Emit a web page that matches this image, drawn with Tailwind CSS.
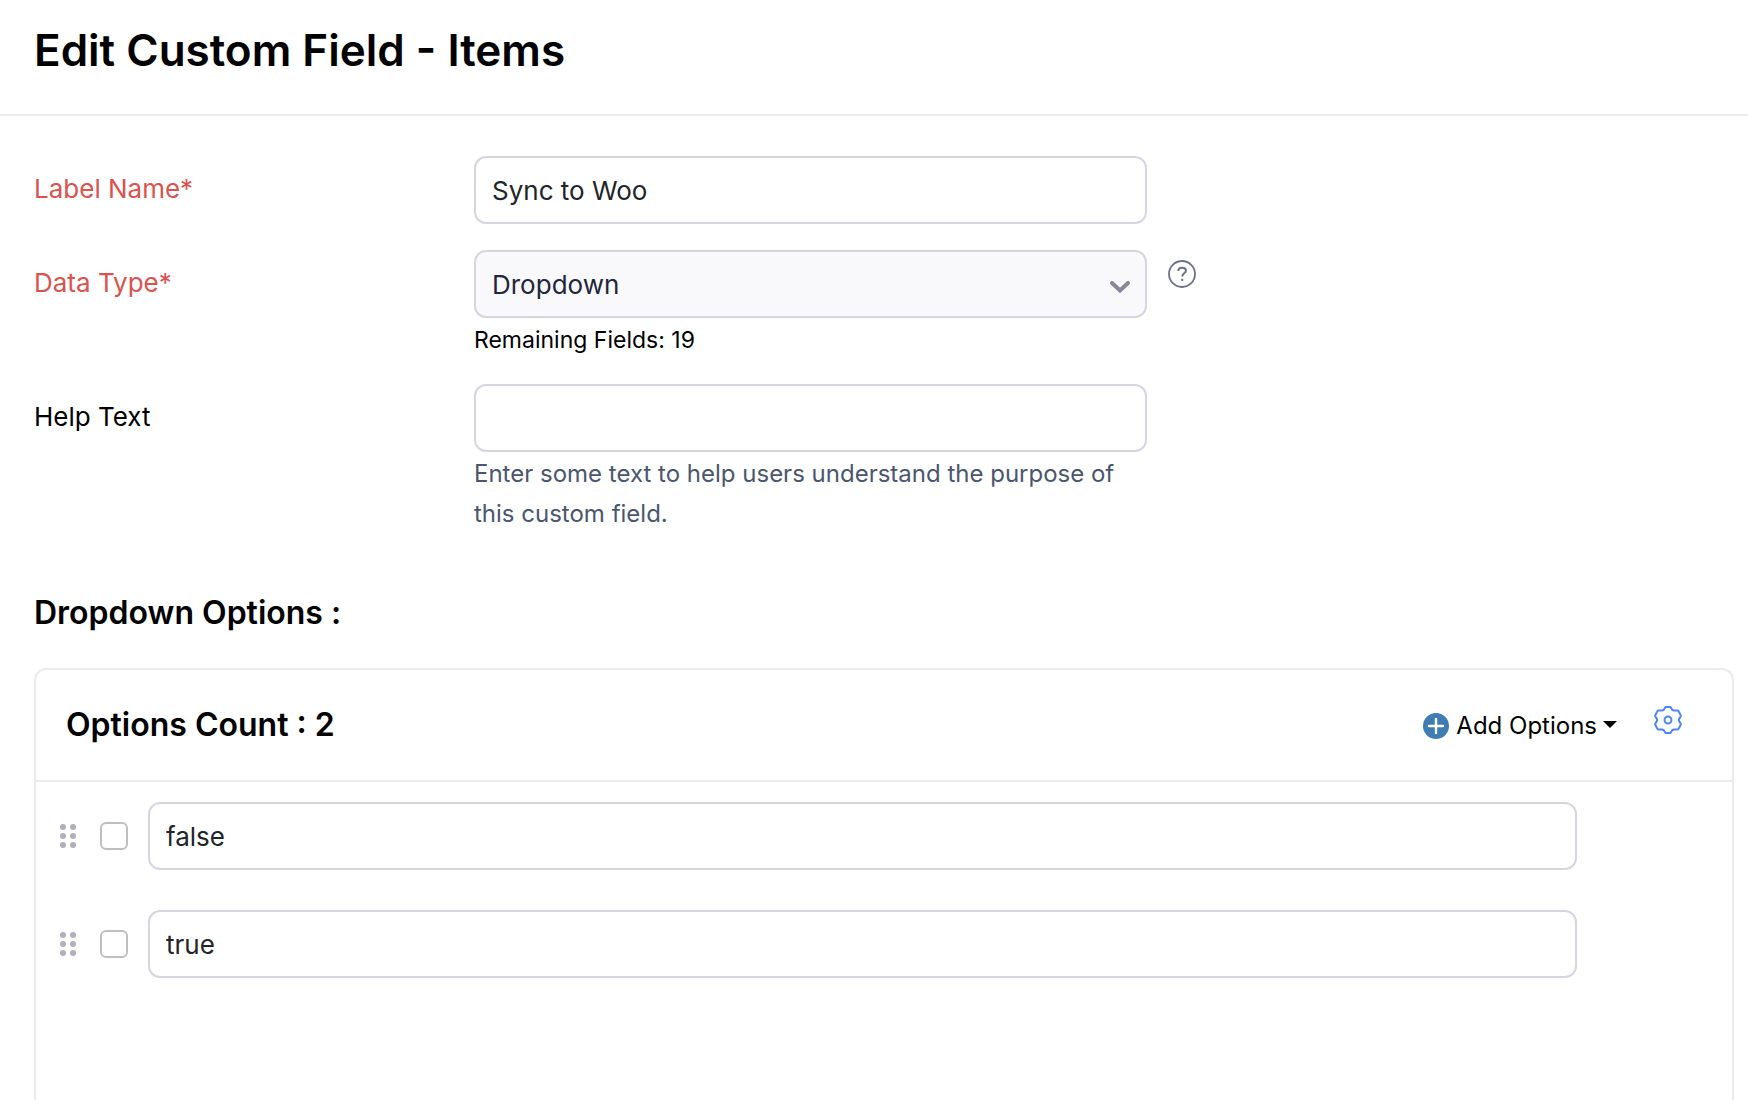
<!DOCTYPE html>
<html lang="en">

<head>
  <meta charset="UTF-8">
  <meta name="viewport" content="width=device-width, initial-scale=1.0">
  <title>Edit Custom Field - Items</title>
  <script src="https://cdn.jsdelivr.net/npm/@tailwindcss/browser@4"></script>
</head>

<body class="bg-white text-black font-['Inter',sans-serif] text-[26px] overflow-hidden">
  <div class="flex flex-col h-screen">
    <!-- Page Header -->
    <header class="px-[34px] pt-5 pb-[34px] border-b-2 border-[#ededed]">
      <h1 class="text-[44px] leading-[60px] font-semibold">Edit Custom Field - Items</h1>
    </header>

    <!-- Form -->
    <form class="flex flex-col flex-1 pl-[34px] pr-[14px] pt-10">
      <div class="flex items-start">
        <label for="label-name" class="w-[440px] pt-4 leading-[34px] text-[#d9534f]">Label Name*</label>
        <input id="label-name" type="text" value="Sync to Woo" class="flex-1 min-w-0 max-w-[673px] h-[68px] px-4 border-2 border-[#d7d5e2] rounded-xl text-[#212529]">
      </div>

      <div class="flex items-start mt-[26px]">
        <label for="data-type" class="w-[440px] pt-4 leading-[34px] text-[#d9534f]">Data Type*</label>
        <div class="flex-1 min-w-0 max-w-[673px]">
          <div class="relative">
            <select id="data-type" class="appearance-none w-full h-[68px] px-4 border-2 border-[#d7d5e2] rounded-xl bg-[#f9f9fb] text-[#21263c]">
              <option>Dropdown</option>
            </select>
            <svg class="absolute right-[17px] top-[31px] w-5 h-3 pointer-events-none" viewBox="0 0 20 12" fill="none" stroke="#8a869a" stroke-width="4" stroke-linecap="round">
              <path d="M2 2l8 7.5L18 2" />
            </svg>
          </div>
          <p class="mt-1 text-[23px] leading-9">Remaining Fields: 19</p>
        </div>
        <button type="button" aria-label="Help" class="ml-[21px] mt-[10px]">
          <svg class="w-7 h-7" viewBox="0 0 28 28" fill="none" stroke="#6c718a">
            <circle cx="14" cy="14" r="13" stroke-width="1.8" />
            <path d="M10.300 11c.1-2.200 1.600-3.300 3.800-3.300 2.300 0 3.800 1.200 3.800 3 0 2.500-3.700 2.700-3.700 5.800M14.200 18.700v2.200" stroke-width="2" />
          </svg>
        </button>
      </div>

      <div class="flex items-start mt-[26px]">
        <label for="help-text" class="w-[440px] pt-4 leading-[34px]">Help Text</label>
        <div class="flex-1 min-w-0 max-w-[673px]">
          <input id="help-text" type="text" class="block w-full h-[68px] px-4 border-2 border-[#d7d5e2] rounded-xl text-[#212529]">
          <p class="mt-[2px] text-2xl leading-10 text-[#4b566e]">Enter some text to help users understand the purpose of this custom field.</p>
        </div>
      </div>

      <h2 class="mt-[58px] text-[32px] leading-[42px] font-semibold">Dropdown Options :</h2>

      <!-- Options Panel -->
      <section class="flex-1 mt-[34px] border-2 border-b-0 border-[#ebeaf0] rounded-t-xl">
        <div class="flex items-center h-28 pl-[30px] pr-[50px] border-b-2 border-[#ebeaf0]">
          <h3 class="text-[32px] leading-10 font-semibold">Options Count : 2</h3>
          <button type="button" class="ml-auto mt-[2px] flex items-center text-2xl">
            <svg class="w-[26px] h-[26px] mr-[7px]" viewBox="0 0 26 26">
              <circle cx="13" cy="13" r="13" fill="#3f7cb2" />
              <path d="M13 6v14M6 13h14" stroke="#fff" stroke-width="2.400" stroke-linecap="round" />
            </svg>
            Add Options
            <svg class="w-[14px] h-[7px] ml-[6px] mb-1" viewBox="0 0 14 7">
              <path d="M0 0h14L7 7z" />
            </svg>
          </button>
          <button type="button" aria-label="Settings" class="ml-[37px] mb-[10px]">
            <svg class="w-7 h-7" viewBox="0 0 28 28" fill="none" stroke="#4a86f7" stroke-width="2" stroke-linejoin="round">
              <path d="M11.500 1H16.500L18.200 3.800Q19 4.600 20 4.600H23.400Q24.300 4.600 24.700 5.400L26.600 9Q27 9.700 26.600 10.400L25.200 12.700Q24.700 14 25.200 15.300L26.600 17.600Q27 18.300 26.600 19L24.700 22.600Q24.300 23.400 23.400 23.400H20Q19 23.400 18.200 24.200L16.500 27H11.500L9.800 24.200Q9 23.400 8 23.400H4.600Q3.700 23.400 3.300 22.600L1.400 19Q1 18.300 1.400 17.600L2.800 15.300Q3.300 14 2.800 12.700L1.400 10.400Q1 9.700 1.400 9L3.300 5.400Q3.700 4.600 4.600 4.600H8Q9 4.600 9.800 3.800Z" />
              <circle cx="14" cy="14" r="3.500" />
            </svg>
          </button>
        </div>

        <ul class="pt-5 pl-6 pr-[155px] space-y-10">
          <li class="flex items-center">
            <svg class="w-4 h-6 fill-[#b1aebf]" viewBox="0 0 16 24">
              <circle cx="3" cy="3" r="3" /><circle cx="13" cy="3" r="3" />
              <circle cx="3" cy="12" r="3" /><circle cx="13" cy="12" r="3" />
              <circle cx="3" cy="21" r="3" /><circle cx="13" cy="21" r="3" />
            </svg>
            <input type="checkbox" aria-label="Select false" class="appearance-none w-7 h-7 ml-6 mr-5 border-2 border-[#bfbfbf] rounded-md">
            <input type="text" aria-label="Option 1" value="false" class="flex-1 min-w-0 h-[68px] px-4 border-2 border-[#d7d5e2] rounded-xl text-[#212529]">
          </li>
          <li class="flex items-center">
            <svg class="w-4 h-6 fill-[#b1aebf]" viewBox="0 0 16 24">
              <circle cx="3" cy="3" r="3" /><circle cx="13" cy="3" r="3" />
              <circle cx="3" cy="12" r="3" /><circle cx="13" cy="12" r="3" />
              <circle cx="3" cy="21" r="3" /><circle cx="13" cy="21" r="3" />
            </svg>
            <input type="checkbox" aria-label="Select true" class="appearance-none w-7 h-7 ml-6 mr-5 border-2 border-[#bfbfbf] rounded-md">
            <input type="text" aria-label="Option 2" value="true" class="flex-1 min-w-0 h-[68px] px-4 border-2 border-[#d7d5e2] rounded-xl text-[#212529]">
          </li>
        </ul>
      </section>
    </form>
  </div>
</body>

</html>
